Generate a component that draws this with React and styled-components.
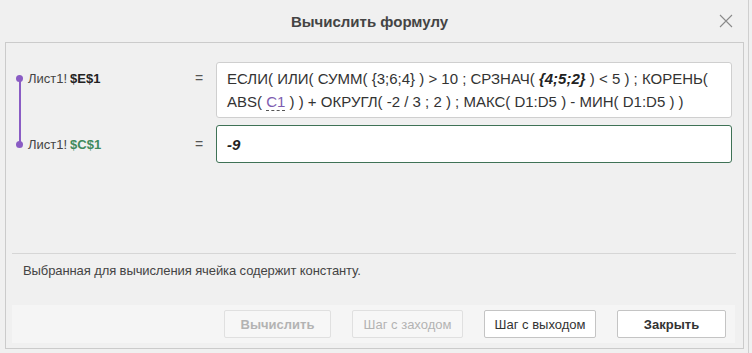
import styled, { createGlobalStyle } from "styled-components";

const GlobalStyle = createGlobalStyle`
    html, body {
        margin: 0;
        padding: 0;
        background: #f0f0f0;
        font-family: "Liberation Sans", Arial, sans-serif;
    }
`;

const Dialog = styled.div`
    width: 749px;
    height: 353px;
    display: flex;
    flex-direction: column;
    background: #f0f0f0;
    border-right: 1px solid #cfcfcf;
    box-sizing: border-box;
`;

const TitleBar = styled.div`
    height: 42px;
    flex-shrink: 0;
    display: grid;
    grid-template-columns: 1fr auto 1fr;
    align-items: center;
    padding: 0 15px 0 0;
`;

const Title = styled.div`
    grid-column: 2;
    font-size: 15px;
    font-weight: 700;
    color: #444;
    padding-left: 6px;
`;

const CloseButton = styled.div`
    grid-column: 3;
    justify-self: end;
    width: 14px;
    height: 14px;
    display: flex;
`;

const Panel = styled.div`
    margin: 0 4px 4px 5px;
    height: 307px;
    flex-shrink: 0;
    box-sizing: border-box;
    border: 1px solid #cbcbcb;
    display: flex;
    flex-direction: column;
`;

const Rows = styled.div`
    padding: 19px 11px 0 8px;
    height: 210px;
    flex-shrink: 0;
    box-sizing: border-box;
`;

const Row = styled.div`
    display: flex;
    align-items: stretch;
    padding-bottom: ${props => props.last ? "0" : "7px"};
`;

const Track = styled.div`
    width: 11px;
    display: flex;
    flex-direction: column;
    align-items: center;
    padding-top: ${props => props.last ? "0" : "13px"};
    margin-bottom: ${props => props.last ? "0" : "-7px"};
    justify-content: ${props => props.last ? "center" : "flex-start"};
`;

const Dot = styled.div`
    width: 7px;
    height: 7px;
    border-radius: 50%;
    background: #8a5cc4;
    flex-shrink: 0;
`;

const Line = styled.div`
    width: 2px;
    flex: 1;
    background: #8a5cc4;
    margin: ${props => props.top ? "0 0 -2px" : "-2px 0 0"};
`;

const TrackHalf = styled.div`
    flex: 1;
    display: flex;
    flex-direction: column;
    align-items: center;
`;

const Label = styled.div`
    width: 156px;
    padding-left: 3px;
    font-size: 13px;
    color: #444;
    display: flex;
    align-items: ${props => props.center ? "center" : "flex-start"};
    padding-top: ${props => props.center ? "0" : "9px"};

    && b {
        color: ${props => props.color || "#222"};
        margin-left: 3px;
    }
`;

const Equals = styled.div`
    width: 30px;
    font-size: 14px;
    color: #555;
    display: flex;
    justify-content: center;
    align-items: ${props => props.center ? "center" : "flex-start"};
    padding-top: ${props => props.center ? "0" : "8px"};
`;

const FormulaBox = styled.div`
    flex: 1;
    margin-left: 2px;
    background: #fff;
    border: 1px solid ${props => props.active ? "#3f7256" : "#cfcfcf"};
    border-radius: 3px;
    padding: ${props => props.active ? "0 10px" : "4px 10px"};
    height: ${props => props.active ? "38px" : "auto"};
    box-sizing: border-box;
    display: flex;
    flex-direction: ${props => props.active ? "row" : "column"};
    justify-content: ${props => props.active ? "flex-start" : "center"};
    align-items: ${props => props.active ? "center" : "stretch"};
    font-size: 15px;
    line-height: 23px;
    color: #333;
`;

const FormulaLine = styled.div`
    white-space: nowrap;
    height: 23px;
`;

const Ref = styled.span`
    color: #7d5cb0;
    border-bottom: 1px dashed #555;
    line-height: 16px;
    display: inline-block;
`;

const Result = styled.span`
    font-weight: 700;
    font-style: italic;
    color: #222;
`;

const Separator = styled.div`
    margin: 0 7px 0 6px;
    border-top: 1px solid #d6d6d6;
`;

const Message = styled.div`
    padding: 9px 17px 0;
    height: 51px;
    flex-shrink: 0;
    box-sizing: border-box;
    font-size: 13px;
    color: #444;
    letter-spacing: -0.1px;
`;

const Footer = styled.div`
    margin: 0 8px 0 6px;
    height: 38px;
    flex-shrink: 0;
    background: #f5f5f5;
    display: flex;
    justify-content: flex-end;
    align-items: center;
    gap: 21px;
    padding-right: 9px;
`;

const Button = styled.button`
    width: ${props => props.width}px;
    height: 28px;
    font-family: "Liberation Sans", Arial, sans-serif;
    font-size: 13px;
    font-weight: ${props => props.bold ? 700 : 400};
    color: ${props => props.disabled ? "#b3b3b3" : "#333"};
    background: ${props => props.disabled ? "#f7f7f7" : "#fff"};
    border: 1px solid ${props => props.disabled ? "#e0e0e0" : "#c4c4c4"};
    border-radius: 2px;
    padding: 0;
`;

const App = () => {
    return (
        <>
            <GlobalStyle />
            <Dialog>
                <TitleBar>
                    <Title>Вычислить формулу</Title>
                    <CloseButton>
                        <svg width="14" height="14" viewBox="0 0 14 14">
                            <path d="M1 1 L13 13 M13 1 L1 13" stroke="#8a8a8a" strokeWidth="1.1" fill="none" />
                        </svg>
                    </CloseButton>
                </TitleBar>
                <Panel>
                    <Rows>
                        <Row>
                            <Track>
                                <Dot />
                                <Line />
                            </Track>
                            <Label>Лист1!<b>$E$1</b></Label>
                            <Equals>=</Equals>
                            <FormulaBox>
                                <FormulaLine>
                                    {"ЕСЛИ( ИЛИ( СУММ( {3;6;4} ) > 10 ; СРЗНАЧ( "}<Result>{"{4;5;2}"}</Result>{" ) < 5 ) ; КОРЕНЬ("}
                                </FormulaLine>
                                <FormulaLine>
                                    {"ABS( "}<Ref>C1</Ref>{" ) ) + ОКРУГЛ( -2 / 3 ; 2 ) ; МАКС( D1:D5 ) - МИН( D1:D5 ) )"}
                                </FormulaLine>
                            </FormulaBox>
                        </Row>
                        <Row last>
                            <Track last>
                                <TrackHalf><Line top /></TrackHalf>
                                <Dot />
                                <TrackHalf />
                            </Track>
                            <Label center color="#3f8a5c">Лист1!<b>$C$1</b></Label>
                            <Equals center>=</Equals>
                            <FormulaBox active>
                                <Result>-9</Result>
                            </FormulaBox>
                        </Row>
                    </Rows>
                    <Separator />
                    <Message>Выбранная для вычисления ячейка содержит константу.</Message>
                    <Footer>
                        <Button width={107} bold disabled>Вычислить</Button>
                        <Button width={111} disabled>Шаг с заходом</Button>
                        <Button width={112}>Шаг с выходом</Button>
                        <Button width={109} bold>Закрыть</Button>
                    </Footer>
                </Panel>
            </Dialog>
        </>
    );
};

export default App;
